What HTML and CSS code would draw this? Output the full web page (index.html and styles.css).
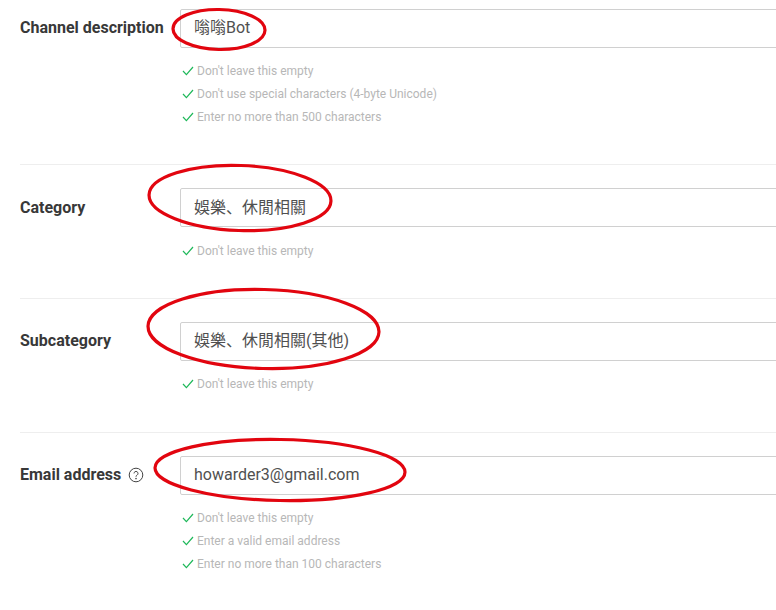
FILE: index.html
```html
<!DOCTYPE html>
<html lang="en">
<head>
<meta charset="utf-8">
<title>Channel settings</title>
<link rel="stylesheet" href="styles.css">
</head>
<body>
<main class="page">
  <section class="row row-first">
    <div class="label">Channel description</div>
    <div class="field">
      <div class="input">嗡嗡Bot</div>
      <ul class="hints">
        <li><svg class="check" viewBox="0 0 12 10"><path d="M1 5l3.4 3.6L11 1"/></svg>Don't leave this empty</li>
        <li><svg class="check" viewBox="0 0 12 10"><path d="M1 5l3.4 3.6L11 1"/></svg>Don't use special characters (4-byte Unicode)</li>
        <li><svg class="check" viewBox="0 0 12 10"><path d="M1 5l3.4 3.6L11 1"/></svg>Enter no more than 500 characters</li>
      </ul>
    </div>
  </section>
  <section class="row row-second">
    <div class="label">Category</div>
    <div class="field">
      <div class="input">娛樂、休閒相關</div>
      <ul class="hints">
        <li><svg class="check" viewBox="0 0 12 10"><path d="M1 5l3.4 3.6L11 1"/></svg>Don't leave this empty</li>
      </ul>
    </div>
  </section>
  <section class="row">
    <div class="label">Subcategory</div>
    <div class="field">
      <div class="input">娛樂、休閒相關(其他)</div>
      <ul class="hints">
        <li><svg class="check" viewBox="0 0 12 10"><path d="M1 5l3.4 3.6L11 1"/></svg>Don't leave this empty</li>
      </ul>
    </div>
  </section>
  <section class="row">
    <div class="label">Email address
      <svg class="help" viewBox="0 0 16 16"><circle cx="8" cy="8" r="6.8"/><path d="M6 6.4a2 2 0 1 1 3.1 1.7c-.7.45-1.1.8-1.1 1.6"/><circle class="dot" cx="8" cy="11.6" r=".8"/></svg>
    </div>
    <div class="field">
      <div class="input">howarder3@gmail.com</div>
      <ul class="hints">
        <li><svg class="check" viewBox="0 0 12 10"><path d="M1 5l3.4 3.6L11 1"/></svg>Don't leave this empty</li>
        <li><svg class="check" viewBox="0 0 12 10"><path d="M1 5l3.4 3.6L11 1"/></svg>Enter a valid email address</li>
        <li><svg class="check" viewBox="0 0 12 10"><path d="M1 5l3.4 3.6L11 1"/></svg>Enter no more than 100 characters</li>
      </ul>
    </div>
  </section>
</main>
<svg class="marks" viewBox="0 0 776 610">
  <ellipse cx="219" cy="29.5" rx="46" ry="20" transform="rotate(1 219 29.5)"/>
  <ellipse cx="240" cy="198" rx="91" ry="32.5" transform="rotate(2 240 198)"/>
  <ellipse cx="263.5" cy="329" rx="115.5" ry="39.5" transform="rotate(1.5 263.5 329)"/>
  <ellipse cx="280" cy="470" rx="125" ry="30.5" transform="rotate(1 280 470)"/>
</svg>
</body>
</html>
```
FILE: styles.css
```css
html, body {
  margin: 0;
  padding: 0;
  background: #fff;
}
body {
  position: relative;
  width: 776px;
  height: 610px;
  overflow: hidden;
  font-family: Roboto, "Noto Sans CJK JP", sans-serif;
  color: #383838;
}
.page {
  padding-left: 20px;
  width: 900px;
}
.row {
  display: flex;
  border-top: 1px solid #eeeeee;
  padding-top: 23px;
  height: 110px;
}
.row-first {
  border-top: 0;
  padding-top: 9px;
  height: 155px;
}
.row:last-child {
  height: 130px;
}
.label {
  width: 160px;
  flex: none;
  display: flex;
  align-items: center;
  gap: 7px;
  height: 37px;
  font-size: 16px;
  font-weight: 700;
  color: #383838;
}
.field {
  flex: 1;
}
.input {
  box-sizing: border-box;
  height: 39px;
  padding: 0 13px;
  border: 1px solid #d0d0d0;
  border-radius: 2px;
  font-size: 16px;
  line-height: 35px;
  color: #505050;
}
.hints {
  list-style: none;
  margin: 11px 0 0;
  padding: 0;
}
.row-second .label {
  height: 39px;
}
.row-second .input {
  line-height: 37px;
}
.row-second .hints {
  margin-top: 12px;
}
.hints li {
  display: flex;
  align-items: center;
  height: 23px;
  font-size: 12px;
  color: #b7b7b7;
}
.check {
  width: 12px;
  height: 10px;
  margin: 0 3px 0 2px;
  flex: none;
}
.check path {
  fill: none;
  stroke: #1fb85a;
  stroke-width: 1.2;
}
.help {
  width: 16px;
  height: 16px;
  flex: none;
}
.help circle, .help path {
  fill: none;
  stroke: #444;
  stroke-width: 1;
}
.help .dot {
  fill: #444;
  stroke: none;
}
.marks {
  position: absolute;
  left: 0;
  top: 0;
  width: 776px;
  height: 610px;
  pointer-events: none;
}
.marks ellipse {
  fill: none;
  stroke: #e2050f;
  stroke-width: 3.2;
}
```
